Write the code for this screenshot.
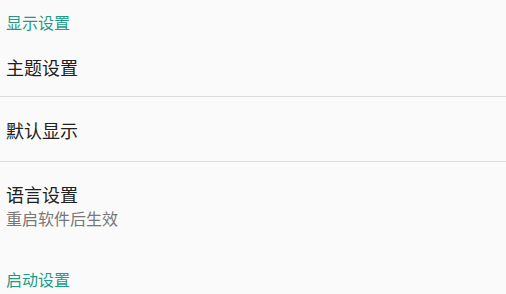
const FONT = { fontFamily: '"Noto Sans CJK SC", "Noto Sans", sans-serif' }

const Divider = () => <div className="h-px w-full bg-[#dcdcdc]"></div>

export default function App() {
    return (
        <div className="w-[506px] h-[294px] overflow-hidden bg-[#fafafa] font-['Noto_Sans_CJK_SC',sans-serif]">
            <div className="pt-[12px] px-[6px] text-[16px] leading-[20px] text-[#1f9a89]">显示设置</div>

            <div className="pt-[24px] pb-[18px] px-[6px] text-[18px] leading-[22px] text-[#212121]">主题设置</div>
            <Divider />

            <div className="pt-[22px] pb-[20px] px-[6px] text-[18px] leading-[22px] text-[#212121]">默认显示</div>
            <Divider />

            <div className="pt-[21px] px-[6px]">
                <div className="text-[18px] leading-[22px] text-[#212121]">语言设置</div>
                <div className="mt-[3px] text-[16px] leading-[20px] text-[#777777]">重启软件后生效</div>
            </div>

            <div className="mt-[41px] px-[6px] text-[16px] leading-[20px] text-[#1f9a89]">启动设置</div>
        </div>
    )
}
